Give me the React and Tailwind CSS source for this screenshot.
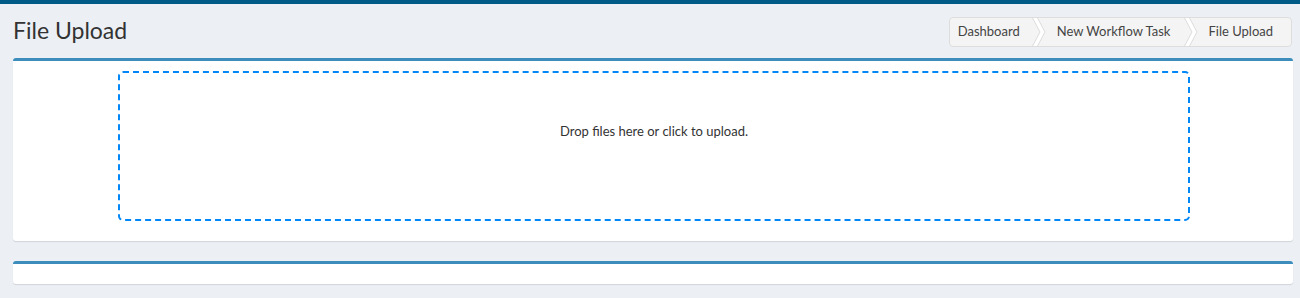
import React from 'react';

function Chevron() {
  return (
    <svg width="14" height="30" viewBox="0 0 14 30" className="shrink-0 block">
      <polygon points="0,0 5,0 13,15 5,30 0,30 8,15" fill="#ffffff" />
      <polyline points="0,0 8,15 0,30" fill="none" stroke="#dcdcdc" strokeWidth="1" />
      <polyline points="5,0 13,15 5,30" fill="none" stroke="#dcdcdc" strokeWidth="1" />
    </svg>
  );
}

export default function App() {
  const crumbs = ['Dashboard', 'New Workflow Task', 'File Upload'];

  return (
    <div
      className="min-h-screen bg-[#ecf0f5] border-t-[4px] border-[#005a87]"
      style={{ fontFamily: 'Lato, "Noto Sans", sans-serif' }}
    >
      {/* Header */}
      <div className="flex items-center justify-between pl-[13px] pr-[8px] pt-[13px] pb-[11px]">
        <h1 className="text-[23px] leading-[26px] mb-[4px] text-[#333] font-normal">File Upload</h1>
        <div className="flex items-center h-[30px] bg-[#f4f4f4] border border-[#dddddd] rounded-[4px] text-[13px] text-[#444] overflow-hidden">
          <span className="pl-[8px] pr-[12px]">{crumbs[0]}</span>
          <Chevron />
          <span className="pl-[11px] pr-[14px]">{crumbs[1]}</span>
          <Chevron />
          <span className="pl-[10px] pr-[18px]">{crumbs[2]}</span>
        </div>
      </div>

      {/* Upload card */}
      <div className="ml-[13px] mr-[7px] bg-white border-t-[3px] border-[#3c8dbc] rounded-[3px] shadow-[0_1px_1px_rgba(0,0,0,0.12)] pt-[10px] pb-[20px]">
        <div className="w-[1072px] h-[150px] ml-[105px] border-2 border-dashed border-[#0087f7] rounded-[5px] pt-[48px] text-center text-[13px] leading-[20px] text-[#333] cursor-pointer">
          Drop files here or click to upload.
        </div>
      </div>

      {/* Second card */}
      <div className="ml-[13px] mr-[7px] mt-[20px] bg-white border-t-[3px] border-[#3c8dbc] rounded-[3px] shadow-[0_1px_1px_rgba(0,0,0,0.12)] h-[23px]" />
    </div>
  );
}
